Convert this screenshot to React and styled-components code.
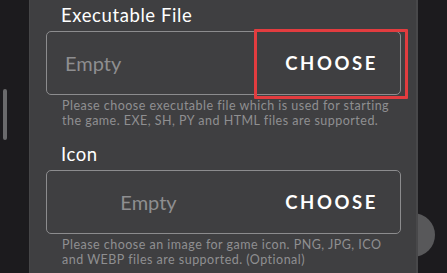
import React from 'react'
import styled, { createGlobalStyle } from 'styled-components'

const Global = createGlobalStyle`
  html, body {
    margin: 0;
    padding: 0;
    background: #1c1b1e;
    font-family: Lato, "Open Sans", sans-serif;
    overflow: hidden;
  }
`

const Screen = styled.div`
  width: 447px;
  height: 273px;
  display: flex;
  position: relative;
  overflow: hidden;
`

const Gutter = styled.div`
  width: 29px;
  padding-left: 3px;
  padding-top: 89px;
  box-sizing: border-box;
`

const ScrollThumb = styled.div`
  width: 4px;
  height: 51px;
  border-radius: 2px;
  background: #6a6a6c;
`

const Panel = styled.div`
  width: 389px;
  height: 273px;
  background: #3f3f41;
  padding: 0 15px 0 16px;
  box-sizing: border-box;
  position: relative;
  z-index: 1;
  border-left: 1px solid #464648;
  border-right: 2px solid #48484a;
`

const Section = styled.div`
  display: flex;
  flex-direction: column;
  margin-top: ${p => p.top}px;
`

const Label = styled.div`
  color: #ffffff;
  font-size: 18.5px;
  line-height: 22px;
  padding-left: 15px;
  margin-bottom: 5px;
  letter-spacing: 0.6px;
`

const Field = styled.div`
  position: relative;
  height: 64px;
  border: 1.5px solid #8c8c8e;
  border-radius: 5px;
  box-sizing: border-box;
  display: flex;
  align-items: center;
`

const Value = styled.div`
  flex: 1;
  color: #8e8e90;
  font-size: 20px;
  padding-left: ${p => (p.centered ? 0 : 18)}px;
  text-align: ${p => (p.centered ? 'center' : 'left')};
`

const Choose = styled.div`
  width: 150px;
  height: 100%;
  display: flex;
  align-items: center;
  justify-content: flex-end;
  padding-right: 22px;
  box-sizing: border-box;
  color: #ffffff;
  font-size: 18.5px;
  font-weight: 700;
  letter-spacing: 2.6px;
`

const FocusRing = styled.div`
  position: absolute;
  left: 207px;
  top: -3.5px;
  right: -7.5px;
  bottom: -4.5px;
  border: 3.5px solid #e23c3f;
  border-radius: 1px;
`

const Help = styled.div`
  color: #8f8f91;
  font-size: 12.5px;
  line-height: 15px;
  padding-left: 16px;
  margin-top: 3px;
  width: 336px;
  letter-spacing: 0.48px;
`

const FloatButton = styled.div`
  position: absolute;
  left: 391px;
  top: 213px;
  width: 44px;
  height: 44px;
  border-radius: 50%;
  background: #58585a;
`

export default function App() {
  return (
    <>
      <Global />
      <Screen>
        <Gutter>
          <ScrollThumb />
        </Gutter>
        <Panel>
          <Section top={4}>
            <Label>Executable File</Label>
            <Field>
              <Value>Empty</Value>
              <Choose>CHOOSE</Choose>
              <FocusRing />
            </Field>
            <Help>
              Please choose executable file which is used for starting the game. EXE, SH, PY and HTML files are supported.
            </Help>
          </Section>
          <Section top={15}>
            <Label>Icon</Label>
            <Field>
              <Value centered>Empty</Value>
              <Choose>CHOOSE</Choose>
            </Field>
            <Help>
              Please choose an image for game icon. PNG, JPG, ICO and WEBP files are supported. (Optional)
            </Help>
          </Section>
        </Panel>
        <FloatButton />
      </Screen>
    </>
  )
}
